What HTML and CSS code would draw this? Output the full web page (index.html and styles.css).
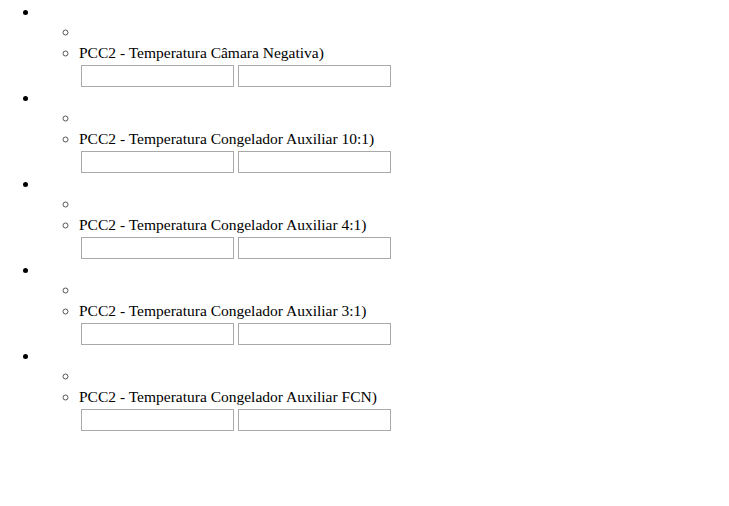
FILE: index.html
```html
<!DOCTYPE html>
<html>
<head>
<meta charset="utf-8">
<link rel="stylesheet" href="styles.css">
</head>
<body>
<ul class="outer">
  <li class="item">&nbsp;
    <ul class="inner">
      <li class="row"></li>
      <li class="row label">PCC2 - Temperatura Câmara Negativa)
        <div class="fields"><input class="field" type="text"><input class="field" type="text"></div>
      </li>
    </ul>
  </li>
  <li class="item">&nbsp;
    <ul class="inner">
      <li class="row"></li>
      <li class="row label">PCC2 - Temperatura Congelador Auxiliar 10:1)
        <div class="fields"><input class="field" type="text"><input class="field" type="text"></div>
      </li>
    </ul>
  </li>
  <li class="item">&nbsp;
    <ul class="inner">
      <li class="row"></li>
      <li class="row label">PCC2 - Temperatura Congelador Auxiliar 4:1)
        <div class="fields"><input class="field" type="text"><input class="field" type="text"></div>
      </li>
    </ul>
  </li>
  <li class="item">&nbsp;
    <ul class="inner">
      <li class="row"></li>
      <li class="row label">PCC2 - Temperatura Congelador Auxiliar 3:1)
        <div class="fields"><input class="field" type="text"><input class="field" type="text"></div>
      </li>
    </ul>
  </li>
  <li class="item">&nbsp;
    <ul class="inner">
      <li class="row"></li>
      <li class="row label">PCC2 - Temperatura Congelador Auxiliar FCN)
        <div class="fields"><input class="field" type="text"><input class="field" type="text"></div>
      </li>
    </ul>
  </li>
</ul>
</body>
</html>
```
FILE: styles.css
```css
html, body {
  margin: 0;
  padding: 0;
  background: #ffffff;
}
body {
  font-family: "Liberation Serif", "Times New Roman", serif;
  font-size: 15.5px;
  color: #000000;
  padding-top: 2px;
}
.outer {
  margin: 0;
  padding-left: 39px;
  list-style: disc;
}
.item {
  min-height: 20px;
  line-height: 20px;
}
.inner {
  margin: 0;
  padding-left: 40px;
  list-style: circle;
}
.row {
  min-height: 20px;
  line-height: 20px;
}
.label {
  line-height: 21px;
}
.inner .row::marker {
  color: #555555;
}
.fields {
  display: flex;
  gap: 4px;
  padding: 2px 0 1px 2px;
}
.field {
  box-sizing: border-box;
  width: 153px;
  height: 22px;
  margin: 0;
  border: 1px solid #a9a9a9;
  padding: 1px 2px;
  background: #fff;
  font: 13px "Liberation Sans", Arial, sans-serif;
}
```
